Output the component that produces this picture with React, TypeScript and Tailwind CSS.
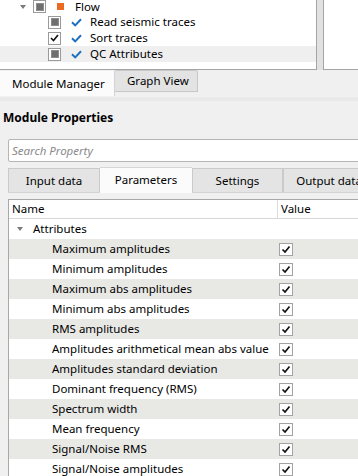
import React from "react";

const font = { fontFamily: '"Noto Sans", "Open Sans", sans-serif' };

function BlueTick() {
  return (
    <svg width="11" height="9" viewBox="0 0 11 9" className="shrink-0">
      <path d="M1 4.2 L4.2 7.4 L10 1.2" fill="none" stroke="#1f6fbf" strokeWidth="2" />
    </svg>
  );
}

function TreeBox({ state }: { state: "partial" | "checked" }) {
  return (
    <div className="w-[13px] h-[13px] border border-[#9a9a9a] bg-white flex items-center justify-center shrink-0">
      {state === "partial" ? (
        <div className="w-[8px] h-[8px] bg-[#6f6f6f] border border-[#8c8c8c]" />
      ) : (
        <svg width="9" height="8" viewBox="0 0 9 8">
          <path d="M1 4 L3.5 6.5 L8 1" fill="none" stroke="#111" strokeWidth="1.6" />
        </svg>
      )}
    </div>
  );
}

function ValueBox() {
  return (
    <div className="w-[14px] h-[13px] border border-[#a3a3a3] bg-white flex items-center justify-center shrink-0">
      <svg width="10" height="9" viewBox="0 0 10 9">
        <path d="M1.5 4.5 L4 7 L8.5 1.5" fill="none" stroke="#111" strokeWidth="1.7" />
      </svg>
    </div>
  );
}

const attributes = [
  "Maximum amplitudes",
  "Minimum amplitudes",
  "Maximum abs amplitudes",
  "Minimum abs amplitudes",
  "RMS amplitudes",
  "Amplitudes arithmetical mean abs value",
  "Amplitudes standard deviation",
  "Dominant frequency (RMS)",
  "Spectrum width",
  "Mean frequency",
  "Signal/Noise RMS",
  "Signal/Noise amplitudes",
];

const children = [
  { label: "Read seismic traces", state: "partial" as const },
  { label: "Sort traces", state: "checked" as const },
  { label: "QC Attributes", state: "partial" as const, selected: true },
];

export default function App() {
  return (
    <div
      className="w-[358px] h-[476px] overflow-hidden bg-[#f0f0f0] text-[11.5px] text-black leading-none"
      style={font}
    >
      {/* flow tree + side panel */}
      <div className="flex h-[70px]">
        <div className="w-[317px] bg-white border-r border-b border-[#a5a5a5] overflow-hidden">
          <div className="-mt-[1px] flex flex-col">
            <div className="h-[15px] flex items-center">
              <svg width="6" height="4" viewBox="0 0 6 4" className="ml-[20px]">
                <path d="M0 0 H6 L3 4 Z" fill="#7a7a7a" />
              </svg>
              <div className="ml-[7px]">
                <TreeBox state="partial" />
              </div>
              <div className="ml-[11px] w-[7px] h-[7px] bg-[#ea6a1f]" />
              <span className="ml-[11px]">Flow</span>
            </div>
            {children.map((c) => (
              <div
                key={c.label}
                className={`h-[16px] flex items-center ${c.selected ? "bg-[#efefef]" : ""}`}
              >
                <div className="ml-[48px]">
                  <TreeBox state={c.state} />
                </div>
                <div className="ml-[10px]">
                  <BlueTick />
                </div>
                <span className="ml-[8px]">{c.label}</span>
              </div>
            ))}
          </div>
        </div>
        <div className="w-[6px] bg-[#e1e1e1]" />
        <div className="flex-1 bg-white border-l border-b border-[#a5a5a5]" />
      </div>

      {/* bottom tabs */}
      <div className="h-[27px] flex items-start pt-[1px]">
        <div className="w-[115px] h-[25px] bg-[#fbfbfb] border-r border-[#d4d4d4] flex items-center pl-[12px] pt-[1px] shrink-0">
          Module Manager
        </div>
        <div className="w-[83px] h-[22px] bg-[#e3e3e3] border-t border-r border-b border-[#c8c8c8] flex items-center pl-[12px] -mt-[1px] rounded-tr-[2px] shrink-0">
          Graph View
        </div>
      </div>
      <div className="h-[4px] bg-[#e9e9e9]" />

      <div className="mt-[11px] pl-[3px] font-bold text-[12px]">Module Properties</div>

      {/* search */}
      <div className="mt-[15px] ml-[8px] h-[23px] w-[360px] shrink-0 bg-white border border-[#b5b5b5] rounded-[2px] flex items-center pl-[3px] italic text-[#8a8a8a]">
        Search Property
      </div>

      {/* property tabs */}
      <div className="mt-[5px] ml-[8px] w-[380px] flex items-end h-[26px] border-b border-[#d3d3d3]">
        <div className="w-[92px] h-[24px] shrink-0 bg-[#e4e4e4] border border-b-0 border-[#cacaca] flex items-center justify-center">
          Input data
        </div>
        <div className="w-[92px] h-[26px] shrink-0 bg-[#fbfbfb] border-t border-[#d6d6d6] flex items-center justify-center -mb-[1px] pb-[2px]">
          Parameters
        </div>
        <div className="w-[91px] h-[24px] shrink-0 bg-[#e4e4e4] border border-b-0 border-[#cacaca] flex items-center justify-center">
          Settings
        </div>
        <div className="w-[92px] h-[24px] shrink-0 bg-[#e4e4e4] border border-b-0 border-[#cacaca] flex items-center justify-center">
          Output data
        </div>
      </div>

      {/* property table */}
      <div className="mt-[6px] ml-[8px] w-[360px] bg-white border-l border-t border-[#a8a8a8]">
        <div className="h-[19px] flex items-center border-b border-[#d8d8d8]">
          <div className="w-[269px] h-full flex items-center pl-[3px] border-r border-[#dcdcdc] shrink-0">
            Name
          </div>
          <div className="pl-[3px]">Value</div>
        </div>
        <div className="h-[20px] flex items-center">
          <svg width="6" height="4" viewBox="0 0 6 4" className="ml-[8px]">
            <path d="M0 0 H6 L3 4 Z" fill="#7a7a7a" />
          </svg>
          <span className="ml-[10px]">Attributes</span>
        </div>
        {attributes.map((a, i) => (
          <div
            key={a}
            className={`h-[20px] flex items-center ${i % 2 === 0 ? "bg-[#e8e8e5]" : "bg-white"}`}
          >
            <div className="w-[270px] pl-[43px] shrink-0">{a}</div>
            <ValueBox />
          </div>
        ))}
      </div>
    </div>
  );
}
